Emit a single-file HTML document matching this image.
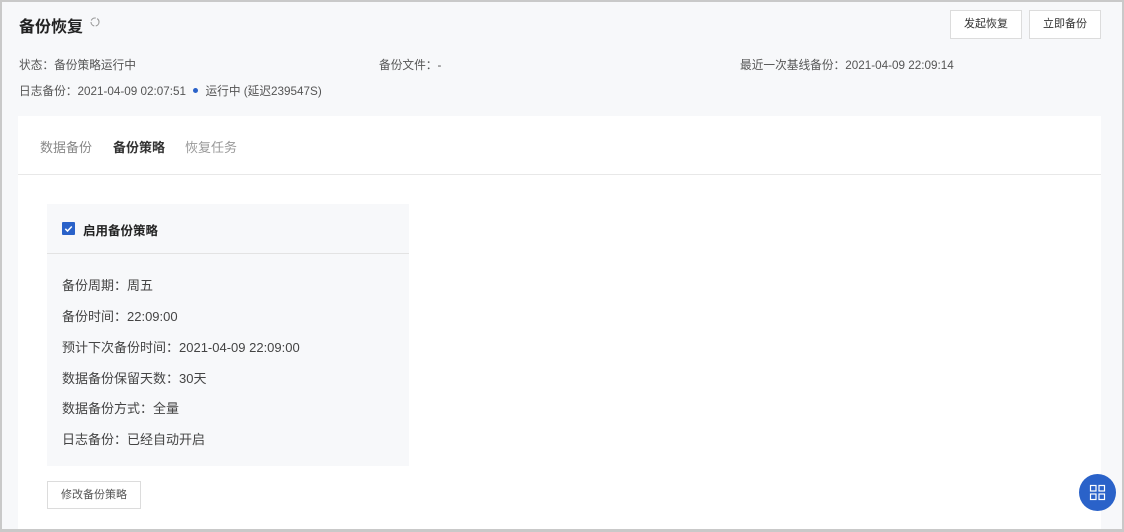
<!DOCTYPE html>
<html><head><meta charset="utf-8"><style>
*{margin:0;padding:0;box-sizing:border-box}
body{width:1124px;height:532px;overflow:hidden;background:#fff;font-family:"Liberation Sans","Noto Sans CJK SC",sans-serif;color:#333}
.frame{position:absolute;left:0;top:0;width:1124px;height:532px;border:2px solid #c9c9c9;border-bottom-width:3px;background:#f7f8fa}
.a{position:absolute;white-space:nowrap}
.t{font-size:11.7px;color:#555}
.r{font-size:13px;color:#444}
.btn{position:absolute;border:1px solid #dcdcdc;background:#fff;font-size:11px;color:#333;text-align:center}
</style></head><body>
<div class="frame"></div>
<div class="a" style="left:19px;top:13px;font-size:16px;font-weight:bold;color:#222">备份恢复</div>
<svg class="a" style="left:89px;top:16px" width="12" height="12" viewBox="0 0 12 12"><circle cx="6" cy="6" r="4" fill="none" stroke="#999" stroke-width="1.1" stroke-dasharray="5.5 1.5"/></svg>
<div class="btn" style="left:950px;top:10px;width:72px;height:29px;line-height:27px">发起恢复</div>
<div class="btn" style="left:1029px;top:10px;width:72px;height:29px;line-height:27px">立即备份</div>
<div class="a t" style="left:19px;top:56px">状态：备份策略运行中</div>
<div class="a t" style="left:379px;top:56px">备份文件：-</div>
<div class="a t" style="left:740px;top:56px">最近一次基线备份：2021-04-09 22:09:14</div>
<div class="a t" style="left:19px;top:82px">日志备份：2021-04-09 02:07:51 <span style="display:inline-block;width:5px;height:5px;border-radius:50%;background:#2a62c9;vertical-align:2px;margin:0 4px"></span> 运行中 (延迟239547S)</div>
<div class="a" style="left:18px;top:116px;width:1083px;height:413px;background:#fff"></div>
<div class="a" style="left:18px;top:174px;width:1083px;height:1px;background:#e8e8e8"></div>
<div class="a" style="left:40px;top:137px;font-size:13px;color:#888">数据备份</div>
<div class="a" style="left:113px;top:137px;font-size:13px;color:#333;font-weight:bold">备份策略</div>
<div class="a" style="left:185px;top:137px;font-size:13px;color:#999">恢复任务</div>
<div class="a" style="left:47px;top:204px;width:362px;height:262px;background:#f7f8fa"></div>
<div class="a" style="left:47px;top:253px;width:362px;height:1px;background:#e3e3e3"></div>
<div class="a" style="left:62px;top:222px;width:13px;height:13px;background:#2a62c9;border-radius:1px"></div>
<svg class="a" style="left:62px;top:222px" width="13" height="13"><path d="M3.3 6.8l2.2 2.2 4.3-4.5" fill="none" stroke="#fff" stroke-width="1.5"/></svg>
<div class="a" style="left:83px;top:220px;font-size:12.5px;font-weight:bold;color:#222">启用备份策略</div>
<div class="a r" style="left:62px;top:275px">备份周期：周五</div>
<div class="a r" style="left:62px;top:306px">备份时间：22:09:00</div>
<div class="a r" style="left:62px;top:337px">预计下次备份时间：2021-04-09 22:09:00</div>
<div class="a r" style="left:62px;top:368px">数据备份保留天数：30天</div>
<div class="a r" style="left:62px;top:398px">数据备份方式：全量</div>
<div class="a r" style="left:62px;top:429px">日志备份：已经自动开启</div>
<div class="btn" style="left:47px;top:481px;width:94px;height:28px;line-height:26px;color:#555">修改备份策略</div>
<div class="a" style="left:1079px;top:474px;width:37px;height:37px;border-radius:50%;background:#2a62c9"></div>
<svg class="a" style="left:1089px;top:484px" width="17" height="17"><g fill="none" stroke="#fff" stroke-width="1.2"><rect x="1.5" y="1.5" width="5.5" height="5.5"/><rect x="10" y="1.5" width="5.5" height="5.5"/><rect x="1.5" y="10" width="5.5" height="5.5"/><rect x="10" y="10" width="5.5" height="5.5"/></g></svg>
</body></html>
